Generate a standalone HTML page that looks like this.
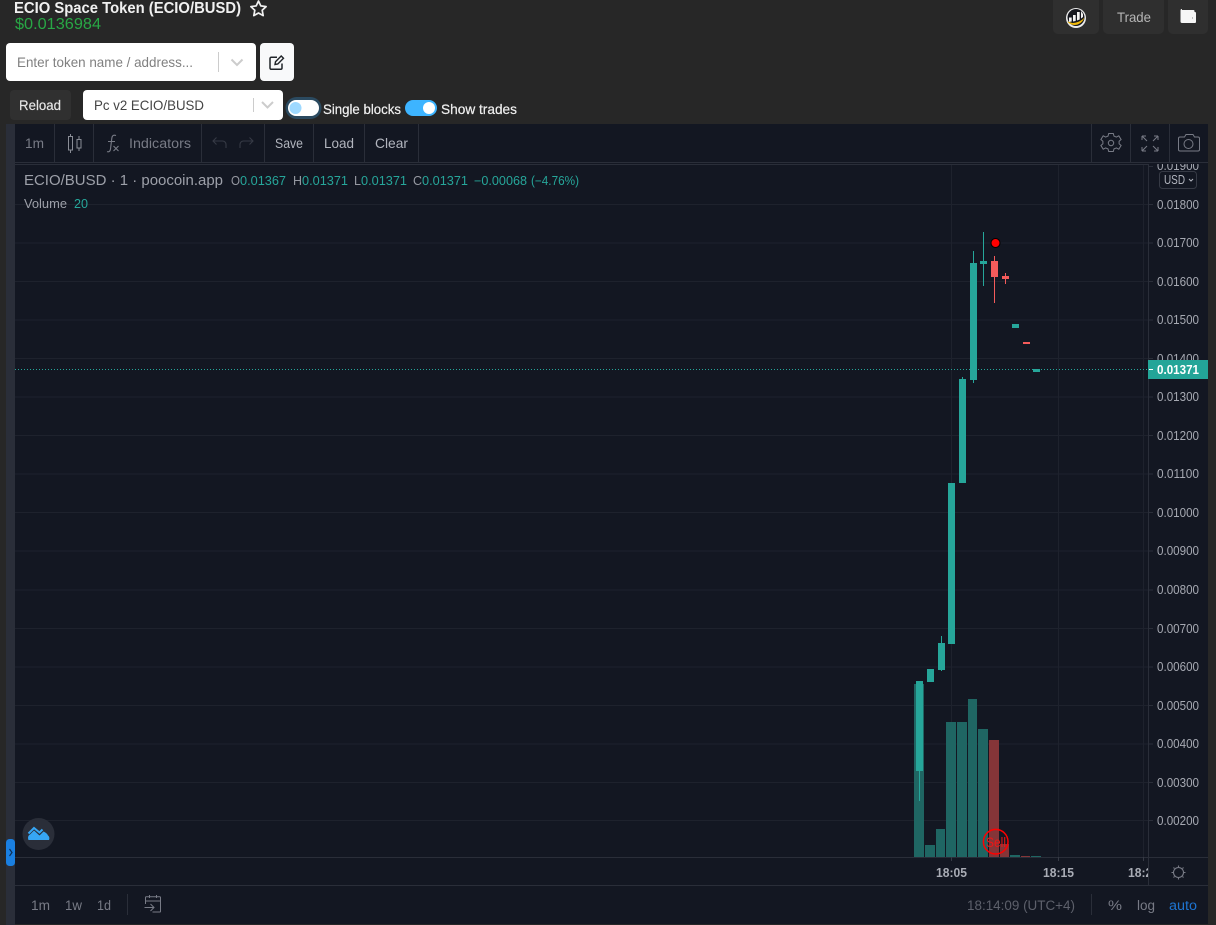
<!DOCTYPE html>
<html><head><meta charset="utf-8"><title>ECIO Space Token (ECIO/BUSD)</title>
<style>
html,body{margin:0;padding:0;width:1216px;height:925px;overflow:hidden;background:#272727}
svg{display:block}
text{font-family:"Liberation Sans",sans-serif}
.tb{font-size:13.5px;fill:#787b86}
.tb2{font-size:14px;fill:#b2b5be}
.px{font-size:13px;fill:#a6a9b2}
.v{font-size:12.5px;fill:#26a69a}
.l{font-size:12.5px;fill:#9598a1}
.g{stroke:#1e222d;stroke-width:1}
.s{stroke:#2a2e39;stroke-width:1}
.c{fill:#26a69a}
.r{fill:#f45b5b}
.vg{fill:#1f6663}
.vr{fill:#853538}
</style></head><body>
<svg width="1216" height="925" viewBox="0 0 1216 925" xmlns="http://www.w3.org/2000/svg">
<rect width="1216" height="925" fill="#272727"/>

<!-- header -->
<text x="14" y="13" font-size="16" font-weight="700" fill="#f0f0f0" textLength="227" lengthAdjust="spacingAndGlyphs">ECIO Space Token (ECIO/BUSD)</text>
<path d="M258.500 1l2.300 4.900 5.300.7-3.900 3.700 1 5.300-4.700-2.600-4.700 2.600 1-5.300-3.900-3.700 5.300-.7z" fill="none" stroke="#f0f0f0" stroke-width="1.700" stroke-linejoin="round"/>
<text x="15" y="29" font-size="16" fill="#28a745" textLength="86" lengthAdjust="spacingAndGlyphs">$0.0136984</text>

<rect x="1053" y="-6" width="46" height="40" rx="5" fill="#2f2f2f"/>
<rect x="1103" y="-6" width="61" height="40" rx="5" fill="#2f2f2f"/>
<rect x="1168" y="-6" width="40" height="40" rx="5" fill="#2f2f2f"/>
<circle cx="1076" cy="18" r="10" fill="#ececec"/>
<circle cx="1076" cy="17.500" r="8.500" fill="#14161d"/>
<path d="M1067.500 21.500c2.500 4.500 13 6 17-4-3 3.500-8 5.500-12 5.500z" fill="#f0b90b"/>
<path d="M1069 22v-4.500h2.700v4zM1073 21.500v-6.500h2.700v6zM1077 20.500v-8.500h2.700v7.500zM1081 18.500v-7.500l2 3v3z" fill="#f2f2f2"/>
<text x="1117" y="22" font-size="14" fill="#b5b5b5" textLength="34" lengthAdjust="spacingAndGlyphs">Trade</text>
<path d="M1182 10h11.500a1 1 0 0 1 1 1v1h.500a1 1 0 0 1 1 1v9a1 1 0 0 1-1 1h-13a1.500 1.500 0 0 1-1.500-1.500v-11a1.500 1.500 0 0 1 1.500-1.500z" fill="#f6f6f6"/>
<rect x="1192" y="17.500" width="1" height="1" fill="#888"/>

<!-- search row -->
<rect x="6" y="43" width="250" height="38" rx="4" fill="#fff"/>
<text x="17" y="67" font-size="14" fill="#808080" textLength="176" lengthAdjust="spacingAndGlyphs">Enter token name / address...</text>
<rect x="218" y="52" width="1" height="20" fill="#ccc"/>
<path d="M231.500 59.500l5.500 5.500 5.500-5.500" fill="none" stroke="#ccc" stroke-width="2"/>
<rect x="260" y="43" width="34" height="38" rx="4" fill="#f8f9fa"/>
<path d="M282 63.500v4.500a1.300 1.300 0 0 1-1.300 1.300h-9.400a1.300 1.300 0 0 1-1.300-1.300v-9.400a1.300 1.300 0 0 1 1.300-1.300h5.700" fill="none" stroke="#212529" stroke-width="1.500"/>
<path d="M275 64.500l.5-2.800 5.700-5.700 2.300 2.300-5.700 5.700z" fill="none" stroke="#212529" stroke-width="1.400"/>

<!-- reload row -->
<rect x="10" y="90" width="61" height="30" rx="4" fill="#303030"/>
<text x="19" y="110" font-size="14" fill="#e6e6e6" stroke="#e6e6e6" stroke-width=".15" textLength="42" lengthAdjust="spacingAndGlyphs">Reload</text>
<rect x="83" y="90" width="200" height="30" rx="4" fill="#fff"/>
<text x="94" y="110" font-size="14" fill="#444" textLength="110" lengthAdjust="spacingAndGlyphs">Pc v2 ECIO/BUSD</text>
<rect x="253" y="98" width="1" height="14" fill="#ccc"/>
<path d="M262 102l5.500 5.500 5.500-5.500" fill="none" stroke="#ccc" stroke-width="2"/>

<rect x="285.500" y="97" width="36" height="22" rx="11" fill="#2b4a60"/>
<rect x="288" y="100" width="31" height="16" rx="8" fill="#fff"/>
<circle cx="295.500" cy="108" r="6" fill="#9ed9ff"/>
<text x="323" y="114" font-size="14" fill="#f0f0f0" stroke="#f0f0f0" stroke-width=".2" textLength="78" lengthAdjust="spacingAndGlyphs">Single blocks</text>
<rect x="405" y="100" width="32" height="16" rx="8" fill="#3db4ff"/>
<circle cx="429" cy="108" r="6" fill="#fff"/>
<text x="441" y="114" font-size="14" fill="#f0f0f0" stroke="#f0f0f0" stroke-width=".2" textLength="76" lengthAdjust="spacingAndGlyphs">Show trades</text>

<!-- chart frame -->
<rect x="6" y="124" width="9" height="801" fill="#2a2e39"/>
<rect x="15" y="124" width="1193" height="800" fill="#131722"/>

<!-- grid -->
<g class="g">
<path d="M15 204.500H1148M15 243H1148M15 281.500H1148M15 320H1148M15 358.500H1148M15 397H1148M15 435.500H1148M15 474H1148M15 512.500H1148M15 551H1148M15 590H1148M15 628.500H1148M15 667H1148M15 705.500H1148M15 744H1148M15 782.500H1148M15 820.500H1148M951.500 164V857M1058.500 164V857M1143.500 164V857"/>
</g>

<!-- toolbar -->
<g class="s">
<path d="M15 162.500H1208M15 164.500H1148M54.500 124V162M93.500 124V162M201.500 124V162M264.500 124V162M313.500 124V162M364.500 124V162M418.500 124V162M1091.500 124V162M1130.500 124V162M1169.500 124V162"/>
<path d="M1148.500 164V885M15 857.500H1208M15 885.500H1208"/>
</g>
<text x="25" y="148" class="tb" textLength="19" lengthAdjust="spacingAndGlyphs">1m</text>
<path d="M70.500 134v2.500M70.500 150v3M68.500 136.500h4v13.500h-4zM79 136v3M79 148v3M77 139.500h4v8.500h-4z" fill="none" stroke="#8a8d96" stroke-width="1"/>
<path d="M116 135.500c-2.500-1-4 .2-4.200 3l-1.300 10.500c-.3 2.500-1.600 3.200-3.500 2.600M108 141.500h7M113.500 146l5 5M118.500 146l-5 5" fill="none" stroke="#787b86" stroke-width="1.100"/>
<text x="129" y="148" class="tb" textLength="62" lengthAdjust="spacingAndGlyphs">Indicators</text>
<path d="M226 148v-3.500a3.500 3.500 0 0 0-3.500-3.500h-9.500M216.500 137.500l-3.500 3.500 3.500 3.500" fill="none" stroke="#363a45" stroke-width="1.100"/>
<path d="M240 148v-3.500a3.500 3.500 0 0 1 3.500-3.500h9.500M249.500 137.500l3.500 3.500-3.500 3.500" fill="none" stroke="#363a45" stroke-width="1.100"/>
<text x="275" y="148" class="tb2" textLength="28" lengthAdjust="spacingAndGlyphs">Save</text>
<text x="324" y="148" class="tb2" textLength="30" lengthAdjust="spacingAndGlyphs">Load</text>
<text x="375" y="148" class="tb2" textLength="33" lengthAdjust="spacingAndGlyphs">Clear</text>

<!-- right toolbar icons -->
<g fill="none" stroke="#787b86" stroke-width="1">
<path d="M1109 133.500h4l.7 2.500 2.400 1 2.300-1.200 2.800 2.900-1.200 2.300 1 2.400 2.400.8v3.600l-2.400.8-1 2.200 1.200 2.300-2.800 2.900" transform="translate(0 0)" opacity="0"/>
<path d="M1109 133.500h4l.7 2.500 2.300 1 2.400-1.300 2.700 3.400-1.800 1.900.3 2.400 2.300 1.100-.9 3.200-2.500.2-1.500 2-.1 2.600h-4l-1-2.200h-2.500l-1 2.200-3.400-1.600.3-2.500-1.700-1.900-2.500.1-.8-3.300 2.200-1.100.3-2.500-1.800-1.800 2.600-3.400 2.400 1.300 2.300-1z" opacity="0"/>
<path d="M1108.700 133.500h4.600l.7 2.600 2.400 1 2.400-1.300 2.300 3.700-2 1.700v2.600l2 1.700-2.300 3.700-2.400-1.300-2.400 1-.7 2.600h-4.600l-.7-2.600-2.400-1-2.400 1.300-2.300-3.700 2-1.700v-2.600l-2-1.700 2.300-3.700 2.400 1.300 2.400-1z"/>
<circle cx="1111" cy="143" r="2.700"/>
<path d="M1142 136l5 5M1142 136h4M1142 136v4M1158 136l-5 5M1158 136h-4M1158 136v4M1142 151l5-5M1142 151h4M1142 151v-4M1158 151l-5-5M1158 151h-4M1158 151v-4"/>
<path d="M1179.500 137h5l1.500-2.500h7l1.500 2.500h3.500a1.500 1.500 0 0 1 1.500 1.500v11a1.500 1.500 0 0 1-1.500 1.500h-18a1.500 1.500 0 0 1-1.500-1.500v-11a1.500 1.500 0 0 1 1.500-1.500z"/>
<circle cx="1188.500" cy="144" r="4.500"/>
</g>

<!-- legend -->
<text x="24" y="185" font-size="15" fill="#9da0a9" textLength="199" lengthAdjust="spacingAndGlyphs">ECIO/BUSD · 1 · poocoin.app</text>
<text x="231" y="185" class="l" textLength="9" lengthAdjust="spacingAndGlyphs">O</text><text x="240" y="185" class="v" textLength="46" lengthAdjust="spacingAndGlyphs">0.01367</text>
<text x="293" y="185" class="l" textLength="9" lengthAdjust="spacingAndGlyphs">H</text><text x="302" y="185" class="v" textLength="46" lengthAdjust="spacingAndGlyphs">0.01371</text>
<text x="354" y="185" class="l" textLength="7" lengthAdjust="spacingAndGlyphs">L</text><text x="361" y="185" class="v" textLength="46" lengthAdjust="spacingAndGlyphs">0.01371</text>
<text x="413" y="185" class="l" textLength="9" lengthAdjust="spacingAndGlyphs">C</text><text x="422" y="185" class="v" textLength="46" lengthAdjust="spacingAndGlyphs">0.01371</text>
<text x="474" y="185" class="v" textLength="53" lengthAdjust="spacingAndGlyphs">−0.00068</text>
<text x="531" y="185" class="v" textLength="48" lengthAdjust="spacingAndGlyphs">(−4.76%)</text>
<text x="24" y="208" font-size="13" fill="#9da0a9" textLength="43" lengthAdjust="spacingAndGlyphs">Volume</text>
<text x="74" y="208" font-size="13" fill="#26a69a" textLength="14" lengthAdjust="spacingAndGlyphs">20</text>

<!-- volume -->
<rect class="vg" x="914" y="684" width="10" height="173"/>
<rect class="vg" x="925" y="845" width="10" height="12"/>
<rect class="vg" x="936" y="829" width="9" height="28"/>
<rect class="vg" x="946" y="722" width="10" height="135"/>
<rect class="vg" x="957" y="722" width="10" height="135"/>
<rect class="vg" x="968" y="699" width="9" height="158"/>
<rect class="vg" x="978" y="729" width="10" height="128"/>
<rect class="vr" x="989" y="740" width="10" height="117"/>
<rect class="vr" x="1000" y="844" width="9" height="13"/>
<rect class="vg" x="1010" y="855" width="10" height="2"/>
<rect class="vr" x="1021" y="856" width="9" height="1"/>
<rect class="vg" x="1031" y="856" width="10" height="1"/>

<!-- last price line -->
<path d="M15 369.500H1149" stroke="#26a69a" stroke-width="1" stroke-dasharray="1 2"/>

<!-- candles -->
<rect class="c" x="919" y="681" width="1" height="120"/>
<rect class="c" x="916" y="681" width="7" height="90"/>
<rect class="c" x="927" y="669" width="7" height="13"/>
<rect class="c" x="941" y="636" width="1" height="35"/>
<rect class="c" x="938" y="643" width="7" height="27"/>
<rect class="c" x="948" y="483" width="7" height="161"/>
<rect class="c" x="962" y="377" width="1" height="106"/>
<rect class="c" x="959" y="379" width="7" height="104"/>
<rect class="c" x="973" y="251" width="1" height="132"/>
<rect class="c" x="970" y="263" width="7" height="117"/>
<rect class="c" x="983" y="232" width="1" height="54"/>
<rect class="c" x="980" y="261" width="7" height="3"/>
<rect class="r" x="994" y="256" width="1" height="47"/>
<rect class="r" x="991" y="261" width="7" height="16"/>
<rect class="r" x="1005" y="273" width="1" height="11"/>
<rect class="r" x="1002" y="276" width="7" height="3"/>
<rect class="c" x="1012" y="324" width="7" height="4"/>
<rect class="r" x="1023" y="342" width="7" height="2"/>
<rect class="c" x="1033" y="369" width="7" height="3"/>

<!-- trade markers -->
<circle cx="995.500" cy="243" r="4.500" fill="#f00" stroke="#000" stroke-width="1"/>
<circle cx="995.700" cy="841.700" r="12.300" fill="none" stroke="#f00" stroke-width="1.500"/>
<text x="986" y="847" font-size="14" fill="#f01515" textLength="20" lengthAdjust="spacingAndGlyphs">Sell</text>

<!-- price axis -->
<svg x="1149" y="164" width="59" height="721" viewBox="1149 164 59 721" overflow="hidden">
<g class="s"><path d="M1149 166.500h4M1149 204.500h4M1149 243h4M1149 281.500h4M1149 320h4M1149 358.500h4M1149 397h4M1149 435.500h4M1149 474h4M1149 512.500h4M1149 551h4M1149 590h4M1149 628.500h4M1149 667h4M1149 705.500h4M1149 744h4M1149 782.500h4M1149 820.500h4"/></g>
<g class="px">
<text x="1157" y="170" textLength="42" lengthAdjust="spacingAndGlyphs">0.01900</text>
<text x="1157" y="209" textLength="42" lengthAdjust="spacingAndGlyphs">0.01800</text>
<text x="1157" y="247" textLength="42" lengthAdjust="spacingAndGlyphs">0.01700</text>
<text x="1157" y="286" textLength="42" lengthAdjust="spacingAndGlyphs">0.01600</text>
<text x="1157" y="324" textLength="42" lengthAdjust="spacingAndGlyphs">0.01500</text>
<text x="1157" y="363" textLength="42" lengthAdjust="spacingAndGlyphs">0.01400</text>
<text x="1157" y="401" textLength="42" lengthAdjust="spacingAndGlyphs">0.01300</text>
<text x="1157" y="440" textLength="42" lengthAdjust="spacingAndGlyphs">0.01200</text>
<text x="1157" y="478" textLength="42" lengthAdjust="spacingAndGlyphs">0.01100</text>
<text x="1157" y="517" textLength="42" lengthAdjust="spacingAndGlyphs">0.01000</text>
<text x="1157" y="555" textLength="42" lengthAdjust="spacingAndGlyphs">0.00900</text>
<text x="1157" y="594" textLength="42" lengthAdjust="spacingAndGlyphs">0.00800</text>
<text x="1157" y="633" textLength="42" lengthAdjust="spacingAndGlyphs">0.00700</text>
<text x="1157" y="671" textLength="42" lengthAdjust="spacingAndGlyphs">0.00600</text>
<text x="1157" y="710" textLength="42" lengthAdjust="spacingAndGlyphs">0.00500</text>
<text x="1157" y="748" textLength="42" lengthAdjust="spacingAndGlyphs">0.00400</text>
<text x="1157" y="787" textLength="42" lengthAdjust="spacingAndGlyphs">0.00300</text>
<text x="1157" y="825" textLength="42" lengthAdjust="spacingAndGlyphs">0.00200</text>
</g>
</svg>
<rect x="1148" y="360" width="60" height="19" fill="#23a598"/>
<path d="M1149 369.500h4" stroke="#fff"/>
<text x="1157" y="374" font-size="13" font-weight="700" fill="#fff" textLength="42" lengthAdjust="spacingAndGlyphs">0.01371</text>
<rect x="1159.500" y="171.500" width="37" height="17" rx="3" fill="#131722" stroke="#363a45"/>
<text x="1164" y="184" font-size="13" fill="#b2b5be" textLength="21" lengthAdjust="spacingAndGlyphs">USD</text>
<path d="M1189 179l2 2 2-2" fill="none" stroke="#b2b5be"/>

<!-- time axis -->
<path d="M951.500 857v4M1058.500 857v4M1143.500 857v4" stroke="#363a45"/>
<text x="936" y="877" font-size="12.500" font-weight="700" fill="#a9acb5" textLength="31" lengthAdjust="spacingAndGlyphs">18:05</text>
<text x="1043" y="877" font-size="12.500" font-weight="700" fill="#a9acb5" textLength="31" lengthAdjust="spacingAndGlyphs">18:15</text>
<svg x="1120" y="860" width="28" height="24" viewBox="1120 860 28 24"><text x="1128" y="877" font-size="12.500" font-weight="700" fill="#a9acb5" textLength="31" lengthAdjust="spacingAndGlyphs">18:25</text></svg>
<g fill="none" stroke="#787b86" stroke-width="1.100">
<circle cx="1178.500" cy="872.500" r="5"/>
<path d="M1178.500 865.500v1.500M1178.500 878v1.500M1171.500 872.500h1.500M1184 872.500h1.500M1173.500 867.500l1 1M1182.500 876.500l1 1M1183.500 867.500l-1 1M1174.500 876.500l-1 1"/>
</g>

<!-- bottom bar -->
<text x="31" y="910" font-size="13.500" fill="#787b86" textLength="19" lengthAdjust="spacingAndGlyphs">1m</text>
<text x="65" y="910" font-size="13.500" fill="#787b86" textLength="17" lengthAdjust="spacingAndGlyphs">1w</text>
<text x="97" y="910" font-size="13.500" fill="#787b86" textLength="14" lengthAdjust="spacingAndGlyphs">1d</text>
<path d="M127.500 894v21M1091.500 894v21" stroke="#2a2e39"/>
<g fill="none" stroke="#787b86" stroke-width="1">
<path d="M145.500 904v-6.500a.800.800 0 0 1 .800-.800h13.400a.800.800 0 0 1 .800.800v13.700a.800.800 0 0 1-.800.800h-7.200M145.500 901h15.500M149.500 895v3M156.500 895v3"/>
<path d="M144.500 907.500h9.500M150.500 904l3.500 3.500-3.500 3.500"/>
</g>
<text x="967" y="910" font-size="13.500" fill="#5d606b" textLength="108" lengthAdjust="spacingAndGlyphs">18:14:09 (UTC+4)</text>
<text x="1108" y="910" font-size="14" fill="#787b86" textLength="14" lengthAdjust="spacingAndGlyphs">%</text>
<text x="1137" y="910" font-size="13.500" fill="#787b86" textLength="18" lengthAdjust="spacingAndGlyphs">log</text>
<text x="1169" y="910" font-size="13.500" fill="#1e74d0" textLength="28" lengthAdjust="spacingAndGlyphs">auto</text>

<!-- logo + tab -->
<circle cx="38.500" cy="834" r="16" fill="#2a2e39"/>
<path d="M28.500 840c-1-2.500-.3-4.500 1.500-5.500l4-4 5.500 5 4-4c2 .8 4 2.500 4.500 4 1.500 1 1.700 3.200 1 4.500z" fill="#36a6f5"/>
<path d="M28.500 833.500l5.500-5.500 5.500 4.500 3-3" fill="none" stroke="#36a6f5" stroke-width="2"/>
<rect x="6" y="839" width="9" height="27" rx="3.500" fill="#1a7fe0"/>
<path d="M9.500 849l2.500 3.500-2.500 3.500" fill="none" stroke="#0d2f55" stroke-width="1.200"/>
</svg>
</body></html>
